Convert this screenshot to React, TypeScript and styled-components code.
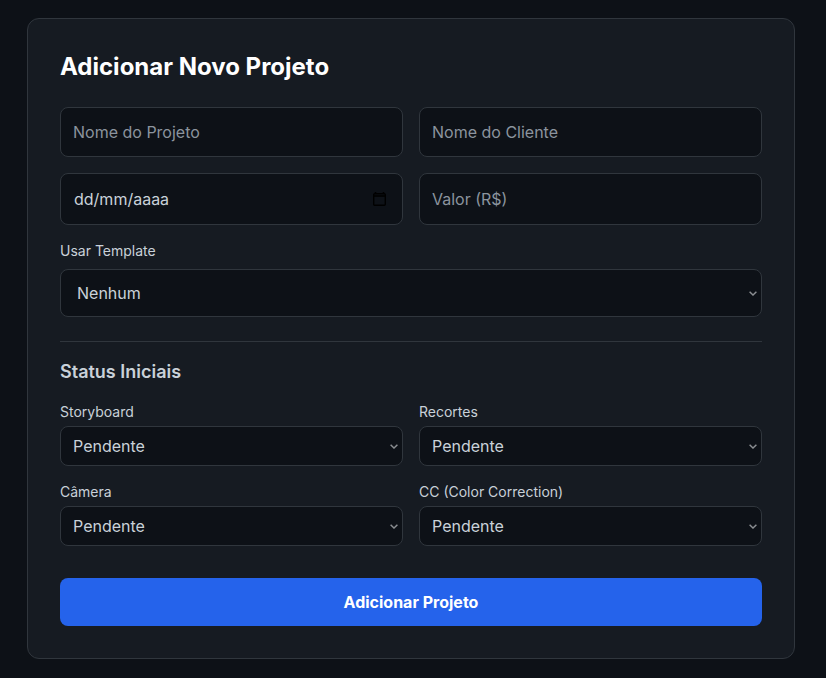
import styled, { createGlobalStyle } from "styled-components";

const chevron =
  "data:image/svg+xml,%3Csvg xmlns='http://www.w3.org/2000/svg' width='8' height='5' viewBox='0 0 8 5' fill='none'%3E%3Cpath d='M.6.8 4 4 7.4.8' stroke='%238a8d91' stroke-width='1.5'/%3E%3C/svg%3E";

const GlobalStyle = createGlobalStyle`
  * {
    box-sizing: border-box;
  }

  html, body {
    margin: 0;
    background: #0d1117;
    font-family: Inter, "Liberation Sans", sans-serif;
  }
`;

const Page = styled.main`
  width: 826px;
  height: 678px;
  padding: 18px 31px 0 27px;
  overflow: hidden;
`;

const Card = styled.form`
  height: 641px;
  padding: 32px;
  background: #161b22;
  border: 1px solid #30363d;
  border-radius: 12px;
`;

const Title = styled.h2`
  margin: 0 0 24px;
  height: 32px;
  font-size: 24px;
  line-height: 32px;
  font-weight: 700;
  color: #ffffff;
`;

const Grid = styled.div`
  display: grid;
  grid-template-columns: 343px 343px;
  gap: 16px;
`;

const Control = styled.input<{ $tall?: boolean }>`
  width: 100%;
  height: ${(p) => (p.$tall ? 52 : 50)}px;
  padding: 0 12px;
  background: #0d1117;
  border: 1px solid #30363d;
  border-radius: 8px;
  color: #c9d1d9;
  font: 400 16px Inter, sans-serif;
  outline: none;

  &::placeholder {
    color: #8b949e;
    opacity: 1;
  }
`;

const DateField = styled.div`
  display: flex;
  align-items: center;
  justify-content: space-between;
  height: 52px;
  padding: 0 16px 0 13px;
  background: #0d1117;
  border: 1px solid #30363d;
  border-radius: 8px;
`;

const DateText = styled.input`
  width: 200px;
  padding: 0;
  background: transparent;
  border: none;
  color: #c9d1d9;
  font: 400 16px Inter, sans-serif;
  outline: none;
`;

const Field = styled.div<{ $gap?: number }>`
  display: flex;
  flex-direction: column;
  gap: ${(p) => p.$gap ?? 4}px;
`;

const Label = styled.label`
  display: block;
  height: 20px;
  font-size: 14px;
  line-height: 20px;
  font-weight: 400;
  color: #c9d1d9;
`;

const TemplateField = styled(Field)`
  margin-top: 16px;
`;

const Select = styled.select<{ $large?: boolean }>`
  width: 100%;
  height: ${(p) => (p.$large ? 48 : 40)}px;
  padding: 0 ${(p) => (p.$large ? 16 : 12)}px;
  appearance: none;
  background: #0d1117 url("${chevron}") no-repeat right 4px center;
  border: 1px solid #30363d;
  border-radius: 8px;
  color: #c9d1d9;
  font: 400 16px Inter, sans-serif;
  outline: none;
`;

const Divider = styled.hr`
  margin: 24px 0 0;
  height: 1px;
  border: none;
  background: #30363d;
`;

const Subtitle = styled.h3`
  margin: 16px 0 16px;
  height: 28px;
  font-size: 18px;
  line-height: 28px;
  font-weight: 600;
  color: #c9d1d9;
`;

const Submit = styled.button`
  display: block;
  width: 100%;
  height: 48px;
  margin-top: 32px;
  background: #2563eb;
  border: none;
  border-radius: 8px;
  color: #ffffff;
  font: 700 16px Inter, sans-serif;
`;

const CalendarIcon = () => (
  <svg width="13" height="14" viewBox="0 0 13 14" fill="none">
    <path d="M2.5 0v2M10.5 0v2" stroke="#000" strokeWidth="1.6" />
    <rect x=".7" y="1.7" width="11.6" height="11.6" rx="1" stroke="#000" strokeWidth="1.4" />
    <path d="M1 4h11" stroke="#000" strokeWidth="1.6" />
  </svg>
);

const StatusSelect = ({ label }: { label: string }) => (
  <Field>
    <Label>{label}</Label>
    <Select>
      <option>Pendente</option>
    </Select>
  </Field>
);

export default function App() {
  return (
    <>
      <GlobalStyle />
      <Page>
        <Card>
          <Title>Adicionar Novo Projeto</Title>
          <Grid>
            <Control placeholder="Nome do Projeto" />
            <Control placeholder="Nome do Cliente" />
            <DateField>
              <DateText defaultValue="dd/mm/aaaa" />
              <CalendarIcon />
            </DateField>
            <Control $tall placeholder="Valor (R$)" />
          </Grid>
          <TemplateField $gap={8}>
            <Label>Usar Template</Label>
            <Select $large>
              <option>Nenhum</option>
            </Select>
          </TemplateField>
          <Divider />
          <Subtitle>Status Iniciais</Subtitle>
          <Grid>
            <StatusSelect label="Storyboard" />
            <StatusSelect label="Recortes" />
            <StatusSelect label="Câmera" />
            <StatusSelect label="CC (Color Correction)" />
          </Grid>
          <Submit type="button">Adicionar Projeto</Submit>
        </Card>
      </Page>
    </>
  );
}
